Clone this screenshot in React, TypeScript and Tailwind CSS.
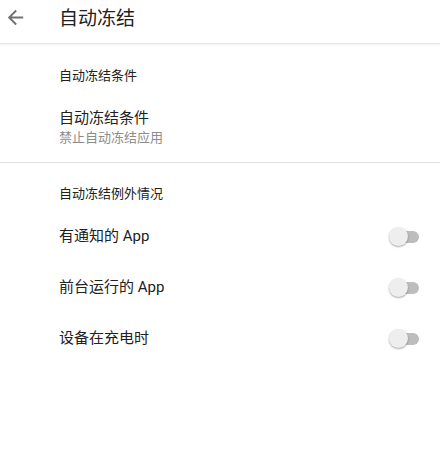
const exceptions = ['有通知的 App', '前台运行的 App', '设备在充电时'];

function Toggle() {
  return (
    <div className="relative w-[30px] h-[20px] flex items-center">
      <div className="absolute left-[10px] w-[20px] h-[12px] rounded-full bg-[#bdbdbd]" />
      <div className="absolute left-0 w-[19px] h-[19px] rounded-full bg-[#eeeeee] shadow-[0_1px_2px_rgba(0,0,0,0.35)]" />
    </div>
  );
}

export default function App() {
  return (
    <div
      className="w-[440px] h-[464px] bg-white text-[#212121] overflow-hidden"
      style={{ fontFamily: 'Roboto, "Noto Sans CJK SC", sans-serif' }}
    >
      <header className="h-[44px] flex items-center border-b border-[#e6e6e6] shadow-[0_1px_2px_rgba(0,0,0,0.06)]">
        <svg className="ml-[4px] mb-[9px]" width="23" height="23" viewBox="0 0 24 24">
          <path d="M20 11H7.83l5.59-5.59L12 4l-8 8 8 8 1.41-1.41L7.83 13H20v-2z" fill="#707070" />
        </svg>
        <h1 className="ml-[32px] mb-[6px] text-[19px] leading-[24px] font-normal">自动冻结</h1>
      </header>

      <section>
        <div className="h-[64px] flex items-center pl-[59px] text-[13px]">自动冻结条件</div>
        <div className="pl-[59px] pb-[14px]">
          <p className="text-[15px] leading-[20px]">自动冻结条件</p>
          <p className="text-[13px] leading-[20px] text-[#8c8c8c]">禁止自动冻结应用</p>
        </div>
      </section>

      <div className="h-px bg-[#e0e0e0]" />

      <section>
        <div className="mt-[21px] pl-[59px] text-[13px] leading-[20px]">自动冻结例外情况</div>
        <div className="mt-[7px]">
          {exceptions.map((label) => (
            <div key={label} className="h-[51px] flex items-center justify-between pl-[59px] pr-[21px]">
              <span className="text-[15px]">{label}</span>
              <Toggle />
            </div>
          ))}
        </div>
      </section>
    </div>
  );
}
